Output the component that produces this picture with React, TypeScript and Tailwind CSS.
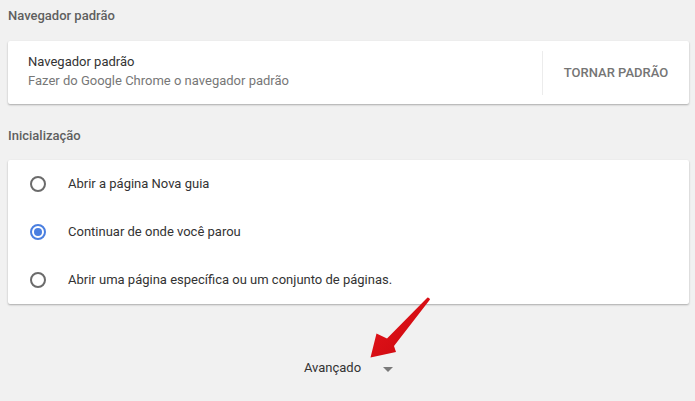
import React from "react";

function Radio({ checked }: { checked?: boolean }) {
  return checked ? (
    <div className="w-[16px] h-[16px] rounded-full border-2 border-[#4a7fe0] flex items-center justify-center">
      <div className="w-[8px] h-[8px] rounded-full bg-[#4a7fe0]" />
    </div>
  ) : (
    <div className="w-[16px] h-[16px] rounded-full border-2 border-[#6b6b6b]" />
  );
}

export default function App() {
  const rows = [
    { label: "Abrir a página Nova guia", checked: false },
    { label: "Continuar de onde você parou", checked: true },
    { label: "Abrir uma página específica ou um conjunto de páginas.", checked: false },
  ];
  return (
    <div
      className="w-[695px] h-[401px] bg-[#f1f1f1] overflow-hidden relative text-[13px]"
      style={{ fontFamily: "Roboto, 'Liberation Sans', sans-serif" }}
    >
      <div className="px-[8px] pr-[6px]">
        <div className="h-[41px] flex items-center pb-[9px] font-medium text-[#5f5f5f]">
          Navegador padrão
        </div>
        <div className="h-[63px] bg-white shadow-[0_1px_2px_rgba(0,0,0,0.3)] flex items-center rounded-[2px]">
          <div className="flex-1 pl-[20px] flex flex-col justify-center pb-[3px]">
            <div className="text-[#333] leading-[19px]">Navegador padrão</div>
            <div className="text-[#777] leading-[19px]">Fazer do Google Chrome o navegador padrão</div>
          </div>
          <div className="w-px h-[44px] bg-[#ececec]" />
          <div className="w-[146px] flex items-center justify-center font-medium text-[#757575]">
            TORNAR PADRÃO
          </div>
        </div>
        <div className="h-[56px] flex items-center pt-[7px] font-medium text-[#5f5f5f]">
          Inicialização
        </div>
        <div className="bg-white shadow-[0_1px_2px_rgba(0,0,0,0.3)] rounded-[2px]">
          {rows.map((r) => (
            <div key={r.label} className="h-[48px] flex items-center pl-[22px]">
              <Radio checked={r.checked} />
              <div className="ml-[22px] text-[#333]">{r.label}</div>
            </div>
          ))}
        </div>
        <div className="flex justify-center items-center mt-[54px] h-[20px]">
          <span className="text-[#333]">Avançado</span>
          <svg width="10" height="5" viewBox="0 0 10 5" className="ml-[22px] mt-[2px]">
            <path d="M0 0 L10 0 L5 5 Z" fill="#7a7a7a" />
          </svg>
        </div>
      </div>
      <svg
        className="absolute left-0 top-0 pointer-events-none"
        width="695"
        height="401"
        viewBox="0 0 695 401"
      >
        <defs>
          <linearGradient id="rg" x1="0" y1="0" x2="1" y2="1">
            <stop offset="0" stopColor="#e8161d" />
            <stop offset="1" stopColor="#c8070d" />
          </linearGradient>
        </defs>
        <path
          d="M427.5 297.5 Q429.5 297.5 430 299.5 L394 346 L396 352 L370.5 357.5 L376.5 333.5 L387 338.5 Z"
          fill="url(#rg)"
        />
      </svg>
    </div>
  );
}
